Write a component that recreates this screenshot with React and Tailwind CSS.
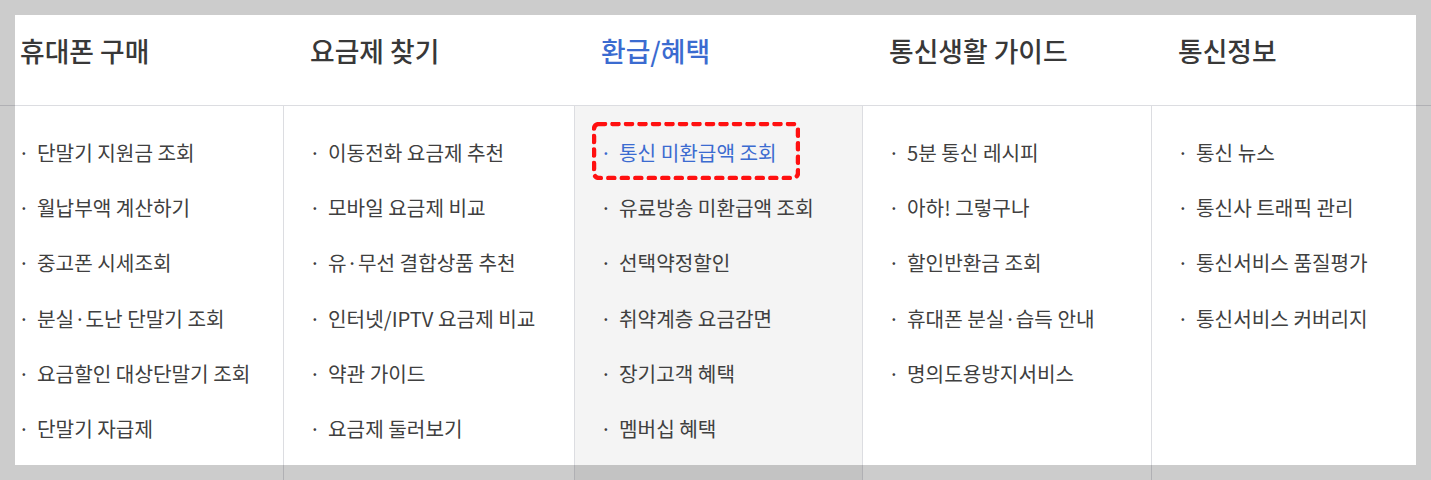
import React from "react";

const COLUMNS = [
  {
    title: "휴대폰 구매",
    width: "w-[290px]",
    items: ["단말기 지원금 조회", "월납부액 계산하기", "중고폰 시세조회", "분실·도난 단말기 조회", "요금할인 대상단말기 조회", "단말기 자급제"],
  },
  {
    title: "요금제 찾기",
    width: "w-[291px]",
    items: ["이동전화 요금제 추천", "모바일 요금제 비교", "유·무선 결합상품 추천", "인터넷/IPTV 요금제 비교", "약관 가이드", "요금제 둘러보기"],
  },
  {
    title: "환급/혜택",
    width: "w-[288px]",
    active: true,
    items: ["통신 미환급액 조회", "유료방송 미환급액 조회", "선택약정할인", "취약계층 요금감면", "장기고객 혜택", "멤버십 혜택"],
  },
  {
    title: "통신생활 가이드",
    width: "w-[289px]",
    items: ["5분 통신 레시피", "아하! 그렇구나", "할인반환금 조회", "휴대폰 분실·습득 안내", "명의도용방지서비스"],
  },
  {
    title: "통신정보",
    width: "flex-1",
    items: ["통신 뉴스", "통신사 트래픽 관리", "통신서비스 품질평가", "통신서비스 커버리지"],
  },
];

function Highlight() {
  // dotted red annotation box round the selected link
  return (
    <svg className="absolute left-[17px] top-[16px]" width="208" height="58" viewBox="0 0 208 58">
      <rect
        x="2"
        y="2"
        width="204"
        height="54"
        rx="5"
        fill="none"
        stroke="#ff1010"
        strokeWidth="4.5"
        strokeDasharray="6 7.5"
        strokeLinecap="round"
      />
    </svg>
  );
}

export default function App() {
  return (
    <div
      className="relative h-[480px] w-full overflow-hidden bg-white"
      style={{ fontFamily: '"Noto Sans CJK KR", "Noto Sans", sans-serif' }}
    >
      <div className="flex h-full flex-col">
        <div className="-ml-[7px] flex h-[106px] border-b border-[#dcdde1]">
          {COLUMNS.map((col) => (
            <div key={col.title} className={`${col.width} shrink-0 pl-[27px] pt-[35.5px]`}>
              <h2
                className={`text-[26.8px] font-medium leading-[30px] ${col.active ? "text-[#3b6bd0]" : "text-[#383838]"}`}
              >
                {col.title}
              </h2>
            </div>
          ))}
        </div>

        <div className="-ml-[7px] flex flex-1">
          {COLUMNS.map((col, i) => (
            <div
              key={col.title}
              className={`${col.width} relative shrink-0 ${i > 0 ? "border-l border-[#dcdde1]" : ""} ${col.active ? "bg-[#f4f4f4]" : ""}`}
            >
              {col.active && <Highlight />}
              <ul className="pt-[19.5px]">
                {col.items.map((item, j) => {
                  const on = col.active && j === 0;
                  return (
                    <li
                      key={item}
                      className={`flex h-[55.2px] items-center pl-[24px] text-[20.2px] ${on ? "text-[#3b6bd0]" : "text-[#404040]"}`}
                    >
                      <span className="inline-block w-[14px] text-center">·</span>
                      <span className="ml-[6px]">{item}</span>
                    </li>
                  );
                })}
              </ul>
            </div>
          ))}
        </div>
      </div>

      <div className="pointer-events-none absolute inset-0">
        <div className="absolute left-[15px] top-[15px] h-[450px] w-[1401px] shadow-[0_0_0_2000px_rgba(0,0,0,0.2)]" />
      </div>
    </div>
  );
}
